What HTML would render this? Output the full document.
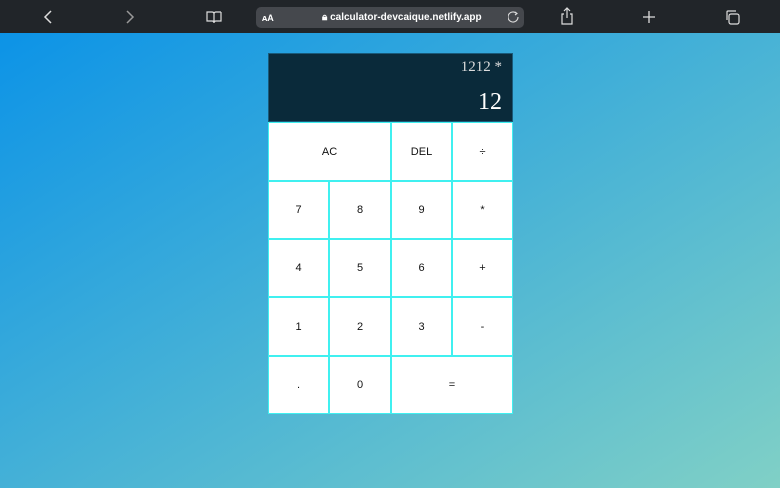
<!DOCTYPE html>
<html><head><style>
*{margin:0;padding:0;box-sizing:border-box}
body{width:780px;height:488px;overflow:hidden;font-family:"Liberation Sans",sans-serif;background:linear-gradient(to bottom right,#0891e8,#80d0c6);position:relative}
.bar{position:absolute;left:0;top:0;width:780px;height:33px;background:#212529;color:#e6e6e6}
.url{position:absolute;left:256px;top:7px;width:268px;height:21px;background:#45484d;border-radius:5px;font-size:10px;color:#fff}
.ic{position:absolute;top:7px}
.out{position:absolute;left:268px;top:53px;width:245px;height:69px;background:#0a2a3a;border:1px solid #1a5a7a;color:#fff;font-family:"Liberation Serif",serif;text-align:right;padding:5px 10px 0 0}
.p{font-size:15px;color:#ddd;line-height:17px}
.c{font-size:24px;line-height:28px;margin-top:12px}
.calc{position:absolute;left:268px;top:122px;width:245px;height:292px;display:grid;grid-template-columns:59px 60px 59px 59px;grid-template-rows:57px 56px 56px 57px 56px;gap:2px;border:1px solid #40f0f0;background:#40f0f0}
.b{background:#fff;display:flex;align-items:center;justify-content:center;font-size:11px;color:#111}
.s2{grid-column:span 2}
</style></head><body>
<div class="bar">
<svg class="ic" style="left:42px" width="12" height="20" viewBox="0 0 12 20"><path d="M9 4L3 10L9 16" stroke="#ddd" stroke-width="1.5" fill="none"/></svg>
<svg class="ic" style="left:124px" width="12" height="20" viewBox="0 0 12 20"><path d="M3 4L9 10L3 16" stroke="#999" stroke-width="1.5" fill="none"/></svg>
<svg class="ic" style="left:206px" width="16" height="20" viewBox="0 0 16 20"><path d="M1 5H6Q8 5 8 7V16Q8 14 6 14H1ZM15 5H10Q8 5 8 7M15 5V14H10Q8 14 8 16" stroke="#ddd" stroke-width="1.2" fill="none"/></svg>
<div class="url"><span style="position:absolute;left:6px;top:6px;font-size:9px;font-weight:bold">ᴀA</span>
<span style="position:absolute;left:66px;top:5px;font-weight:bold">🔒︎ calculator-devcaique.netlify.app</span>
<svg style="position:absolute;left:252px;top:4px" width="12" height="13" viewBox="0 0 12 13"><path d="M8 2A5 5 0 1 0 10 6M7 1L9 2.5L7 4" stroke="#ddd" stroke-width="1.1" fill="none"/></svg></div>
<svg class="ic" style="left:560px;top:6px" width="14" height="20" viewBox="0 0 14 20"><path d="M4 8H2V18H12V8H10M7 2V12M4 5L7 2L10 5" stroke="#ddd" stroke-width="1.2" fill="none"/></svg>
<svg class="ic" style="left:642px" width="14" height="20" viewBox="0 0 14 20"><path d="M7 4V16M1 10H13" stroke="#ddd" stroke-width="1.3"/></svg>
<svg class="ic" style="left:725px" width="16" height="20" viewBox="0 0 16 20"><rect x="4" y="7" width="10" height="10" rx="2" stroke="#ddd" stroke-width="1.2" fill="none"/><path d="M2 13V5Q2 4 3 4H11" stroke="#ddd" stroke-width="1.2" fill="none"/></svg>
</div>
<div class="out"><div class="p">1212 *</div><div class="c">12</div></div>
<div class="calc">
<div class="b s2">AC</div><div class="b">DEL</div><div class="b">÷</div>
<div class="b">7</div><div class="b">8</div><div class="b">9</div><div class="b">*</div>
<div class="b">4</div><div class="b">5</div><div class="b">6</div><div class="b">+</div>
<div class="b">1</div><div class="b">2</div><div class="b">3</div><div class="b">-</div>
<div class="b">.</div><div class="b">0</div><div class="b s2">=</div>
</div>
</body></html>
